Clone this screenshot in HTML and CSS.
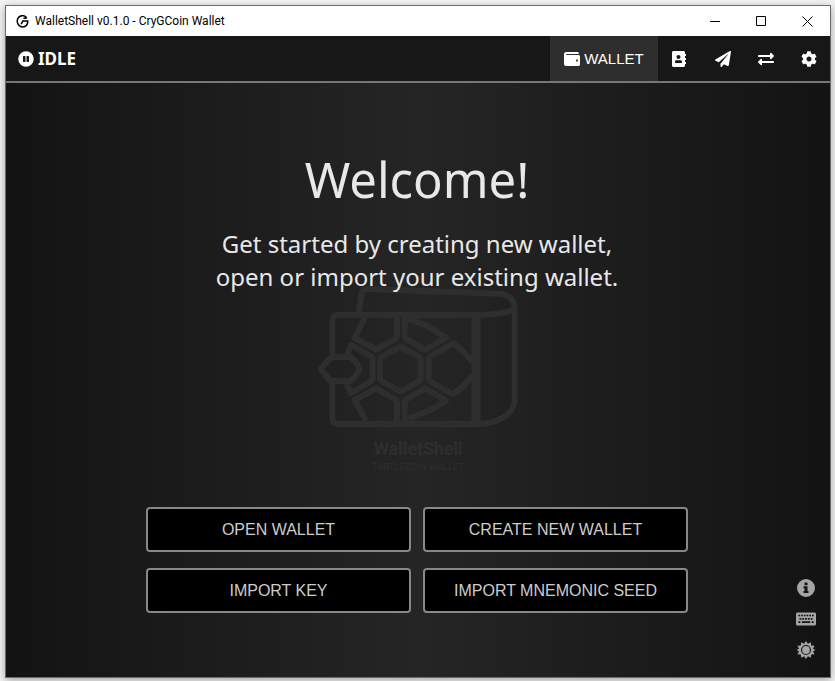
FILE: index.html
```html
<!DOCTYPE html>
<html lang="en">
<head>
<meta charset="utf-8">
<title>WalletShell v0.1.0 - CryGCoin Wallet</title>
<link rel="stylesheet" href="styles.css">
</head>
<body>
<div class="window">
  <div class="titlebar">
    <svg class="app-icon" viewBox="0 0 14 14" aria-hidden="true"><path d="M11.500 3C9-.2 4-.2 1.900 3.700.2 8 2.700 12.800 7 12.800c3.500 0 5.700-2.500 5.700-6.300H7.500L5.500 9.800M11.500 3.500H8" fill="none" stroke="#000" stroke-width="1.600"/></svg>
    <span class="app-title">WalletShell v0.1.0 - CryGCoin Wallet</span>
    <div class="controls">
      <button type="button" aria-label="Minimize"><svg viewBox="0 0 11 11"><path d="M0 5.500h10"/></svg></button>
      <button type="button" aria-label="Maximize"><svg viewBox="0 0 11 11"><path d="M.5.5h9v9h-9z"/></svg></button>
      <button type="button" aria-label="Close"><svg viewBox="0 0 11 11"><path d="M.5.5l10 10M10.500.5l-10 10"/></svg></button>
    </div>
  </div>
  <header class="navbar">
    <div class="status">
      <svg viewBox="0 0 512 512" aria-hidden="true"><path fill-rule="evenodd" d="M256 8a248 248 0 1 0 0 496 248 248 0 0 0 0-496zm-16 328c0 9-7 16-16 16h-48c-9 0-16-7-16-16V176c0-9 7-16 16-16h48c9 0 16 7 16 16zm112 0c0 9-7 16-16 16h-48c-9 0-16-7-16-16V176c0-9 7-16 16-16h48c9 0 16 7 16 16z"/></svg>
      <span>IDLE</span>
    </div>
    <nav class="tabs" aria-label="Main">
      <button type="button" class="tab active"><svg viewBox="0 0 512 512" aria-hidden="true"><path d="M461.200 128H80c-8.840 0-16-7.160-16-16s7.160-16 16-16h384c8.840 0 16-7.160 16-16 0-26.510-21.490-48-48-48H64C28.650 32 0 60.650 0 96v320c0 35.350 28.650 64 64 64h397.200c28.020 0 50.800-21.530 50.800-48V176c0-26.470-22.780-48-50.800-48zM416 336c-17.670 0-32-14.330-32-32s14.330-32 32-32 32 14.330 32 32-14.330 32-32 32z"/></svg>WALLET</button>
      <button type="button" class="tab" aria-label="Address book"><svg viewBox="0 0 512 512"><path d="M436 160c6.600 0 12-5.400 12-12v-40c0-6.600-5.400-12-12-12h-20V48c0-26.500-21.500-48-48-48H48C21.500 0 0 21.500 0 48v416c0 26.500 21.500 48 48 48h320c26.500 0 48-21.500 48-48v-48h20c6.600 0 12-5.400 12-12v-40c0-6.600-5.400-12-12-12h-20v-64h20c6.600 0 12-5.400 12-12v-40c0-6.600-5.400-12-12-12h-20v-64h20zm-228-32c35.300 0 64 28.700 64 64s-28.700 64-64 64-64-28.700-64-64 28.700-64 64-64zm112 236.800c0 10.600-10 19.200-22.400 19.200H118.400C106 384 96 375.400 96 364.800v-19.200c0-31.800 30.100-57.600 67.200-57.600h5c12.300 5.100 25.700 8 39.800 8s27.600-2.900 39.800-8h5c37.100 0 67.200 25.800 67.200 57.600v19.200z"/></svg></button>
      <button type="button" class="tab" aria-label="Send"><svg viewBox="0 0 512 512"><path d="M476 3.200L12.500 270.600c-18.100 10.400-15.800 35.600 2.200 43.200L121 358.400l287.300-253.200c5.500-4.900 13.300 2.600 8.600 8.300L176 407v80.500c0 23.600 28.500 32.900 42.500 15.800L282 426l124.600 52.200c14.200 6 30.400-2.900 33-18.200l72-432C515 7.800 493.300-6.800 476 3.200z"/></svg></button>
      <button type="button" class="tab" aria-label="Transactions"><svg viewBox="0 0 512 512"><path d="M0 168v-16c0-13.255 10.745-24 24-24h360V80c0-21.367 25.899-32.042 40.971-16.971l80 80c9.372 9.373 9.372 24.569 0 33.941l-80 80C409.956 271.982 384 261.456 384 240v-48H24c-13.255 0-24-10.745-24-24zm488 152H128v-48c0-21.314-25.862-32.080-40.971-16.971l-80 80c-9.372 9.373-9.372 24.569 0 33.941l80 80C102.057 463.997 128 453.437 128 432v-48h360c13.255 0 24-10.745 24-24v-16c0-13.255-10.745-24-24-24z"/></svg></button>
      <button type="button" class="tab" aria-label="Settings"><svg viewBox="0 0 512 512"><path d="M487.400 315.700l-42.600-24.600c4.300-23.200 4.300-47 0-70.200l42.600-24.600c4.900-2.800 7.100-8.600 5.500-14-11.100-35.600-30-67.800-54.700-94.600-3.800-4.100-10-5.100-14.800-2.300L380.800 110c-17.900-15.400-38.500-27.300-60.800-35.100V25.800c0-5.600-3.900-10.500-9.400-11.700-36.700-8.200-74.300-7.800-109.200 0-5.500 1.200-9.400 6.100-9.400 11.700V75c-22.200 7.900-42.800 19.800-60.800 35.100L88.700 85.500c-4.900-2.800-11-1.900-14.800 2.300-24.700 26.700-43.600 58.900-54.700 94.600-1.700 5.400.6 11.200 5.500 14L67.300 221c-4.300 23.200-4.300 47 0 70.200l-42.600 24.600c-4.900 2.800-7.100 8.600-5.500 14 11.100 35.600 30 67.800 54.700 94.600 3.800 4.100 10 5.100 14.800 2.300l42.600-24.600c17.900 15.400 38.500 27.300 60.800 35.100v49.200c0 5.600 3.900 10.500 9.400 11.700 36.700 8.200 74.300 7.800 109.200 0 5.500-1.200 9.400-6.100 9.400-11.700v-49.200c22.200-7.900 42.800-19.800 60.800-35.100l42.600 24.600c4.900 2.800 11 1.900 14.800-2.300 24.700-26.700 43.600-58.900 54.700-94.600 1.500-5.500-.7-11.300-5.600-14.100zM256 336c-44.100 0-80-35.900-80-80s35.900-80 80-80 80 35.900 80 80-35.900 80-80 80z"/></svg></button>
    </nav>
  </header>
  <main class="content">
    <svg class="watermark" viewBox="0 0 720 630" aria-hidden="true">
      <g fill="none" stroke="#2e2e2e" stroke-width="18" stroke-linejoin="round">
        <path d="M97 237V139q0-19 19-19H530C580 120 644 111 644 100C644 70 620 57 595 56L205 42Q187 41 185 55L176 112"/>
        <path d="M644 100V375C642 420 590 447 530 447H116q-19 0-19-19V325"/>
        <path d="M528 120V447" stroke-width="28"/>
        <path d="M151 246H97L90 250 62 282 90 317 97 318H151Q164 311 179 282 164 252 151 246z"/>
        <path d="M301 215L355 244Q362 248 362 256V308Q362 316 355 320L301 350 247 320Q240 316 240 308V256Q240 248 247 244z"/>
        <path d="M195 127L164 189 228 224 284 193Q291 189 291 181V126M314 127V181Q314 189 321 193L375 225 438 188 378 151 325 132"/>
        <path d="M141 240L153 210 209 241Q218 246 218 254V310Q218 317 211 321L153 354 139 326"/>
        <path d="M518 263Q490 225 459 205L393 243Q386 247 386 255V309Q386 317 393 321L459 358Q493 335 518 302"/>
        <path d="M198 438L164 375 228 340 284 372Q291 376 291 384V438M314 438V384Q314 376 321 372L375 340 438 376Q397 407 325 431"/>
      </g>
      <text class="mark-name" x="354" y="541" text-anchor="middle">WalletShell</text>
      <text class="mark-sub" x="354" y="586" text-anchor="middle">TURTLECOIN WALLET</text>
    </svg>
    <h1>Welcome!</h1>
    <p>Get started by creating new wallet,<br>open or import your existing wallet.</p>
    <div class="actions">
      <button type="button">OPEN WALLET</button>
      <button type="button">CREATE NEW WALLET</button>
      <button type="button">IMPORT KEY</button>
      <button type="button">IMPORT MNEMONIC SEED</button>
    </div>
    <div class="tools">
      <button type="button" aria-label="About"><svg viewBox="0 0 20 20"><path fill-rule="evenodd" d="M10 1a9 9 0 1 0 0 18 9 9 0 0 0 0-18zM8.500 4.500h3v2.700h-3zM7.500 8.300h4v4.700h1v2h-5v-2h1v-2.700h-1z"/></svg></button>
      <button type="button" aria-label="Keyboard shortcuts"><svg viewBox="0 0 20 20"><rect y="3.500" width="20" height="13" rx="1.500"/><g stroke="#161616" stroke-width="1.700" fill="none"><path d="M2.300 6.500h15.400" stroke-dasharray="1.800 .92"/><path d="M3.500 9.800h13" stroke-dasharray="1.800 1"/><path d="M2.300 13.200h2M5.800 13.200h8.400M15.700 13.200h2"/></g></svg></button>
      <button type="button" aria-label="Toggle theme"><svg viewBox="0 0 20 20"><path fill-rule="evenodd" d="M10 1l1.900 2.800 2.900-1.600.4 3.300 3.300.3-1.500 2.900L19.500 10 17 11.300l1.500 2.900-3.300.3-.4 3.300-2.900-1.600L10 19l-1.900-2.800-2.900 1.600-.4-3.300-3.300-.3L3 11.300.5 10 3 8.700 1.500 5.800l3.300-.3.4-3.300 2.900 1.600zM10 5a5 5 0 1 0 0 10 5 5 0 0 0 0-10z"/><circle cx="10" cy="10" r="3.900"/></svg></button>
    </div>
  </main>
</div>
</body>
</html>
```
FILE: styles.css
```css
* { box-sizing: border-box; }

body {
  margin: 0;
  min-height: 100vh;
  padding: 5px 4px 3px 5px;
  display: flex;
  background: #f4f4f4;
  font-family: "Noto Sans", sans-serif;
}

button {
  margin: 0;
  padding: 0;
  border: 0;
  background: none;
  color: inherit;
  font: inherit;
}

svg { display: block; }

.window {
  flex: 1;
  display: flex;
  flex-direction: column;
  border: 1px solid #6b6b6b;
  box-shadow: 0 2px 8px rgba(0, 0, 0, 0.35);
  background: #171717;
}

.titlebar {
  display: flex;
  align-items: center;
  height: 30px;
  padding-left: 10px;
  background: #fff;
  color: #000;
}

.app-icon { width: 13px; height: 13px; }

.app-title {
  margin-left: 6px;
  font: 12px/16px Roboto, sans-serif;
}

.controls { display: flex; margin-left: auto; }

.controls button {
  display: grid;
  place-items: center;
  width: 46px;
  height: 30px;
}

.controls svg {
  width: 11px;
  height: 11px;
  fill: none;
  stroke: #000;
}

.navbar {
  display: flex;
  justify-content: space-between;
  height: 47px;
  border-bottom: 2px solid #777;
  background: #171717;
  color: #fff;
}

.status {
  display: flex;
  align-items: center;
  gap: 4px;
  padding-left: 12px;
  font-size: 17px;
  font-weight: 700;
}

.navbar svg { width: 16px; height: 16px; fill: currentColor; }

.tabs { display: flex; }

.tab {
  display: flex;
  align-items: center;
  justify-content: center;
  width: 43px;
}

.tab.active {
  gap: 4px;
  width: 108px;
  background: #2e2e2e;
  font: 15px "Liberation Sans", sans-serif;
}

.content {
  position: relative;
  flex: 1;
  display: flex;
  flex-direction: column;
  align-items: center;
  padding: 62px 26px 64px 24px;
  background: linear-gradient(90deg, #131313, #252525 50%, #131313);
  color: #e8e8e8;
  text-align: center;
}

.watermark {
  position: absolute;
  top: 192px;
  left: 50%;
  width: 240px;
  margin-left: -118px;
}

.watermark text { fill: #2e2e2e; }
.mark-name { font: 700 53px Roboto, sans-serif; }
.mark-sub { font: 28px Roboto, sans-serif; }

h1, p { position: relative; margin: 0; }

h1 { font-size: 49px; font-weight: 400; line-height: 68px; }

p { margin-top: 14px; font-size: 24px; line-height: 33px; }

.actions {
  display: grid;
  grid-template-columns: 1fr 1fr;
  gap: 16px 12px;
  width: 100%;
  max-width: 542px;
  margin-top: auto;
}

.actions button {
  height: 45px;
  border: 2px solid #888;
  border-radius: 4px;
  background: #000;
  color: #ccc;
  font: 16px "Liberation Sans", sans-serif;
}

.tools {
  position: absolute;
  right: 14px;
  bottom: 17px;
  display: grid;
  gap: 11px;
}

.tools svg { width: 20px; height: 20px; fill: #a5a5a5; }
```
